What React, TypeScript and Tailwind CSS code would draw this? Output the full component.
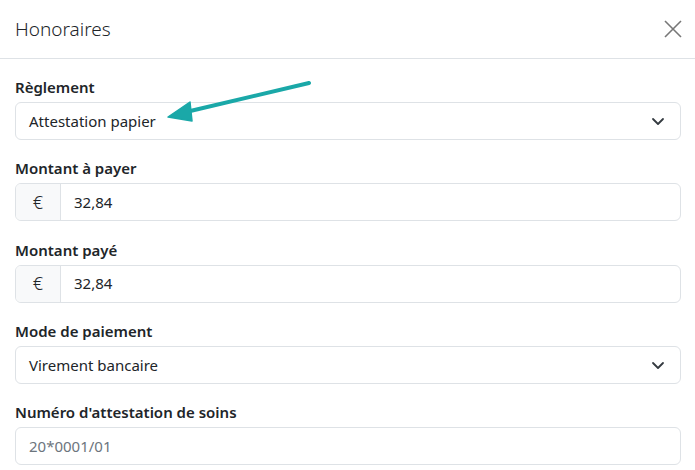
import React from 'react';

const font = { fontFamily: '"Segoe UI", "Noto Sans", "Open Sans", sans-serif' };

function Chevron() {
    return (
        <svg width="14" height="14" viewBox="0 0 14 14" className="shrink-0">
            <path d="M2 5l5 5 5-5" fill="none" stroke="#343a40" strokeWidth="1.8" strokeLinecap="round" strokeLinejoin="round" />
        </svg>
    );
}

function Label({ children }: { children: React.ReactNode }) {
    return <div className="h-[22px] mb-1 text-[15px] leading-[22px] font-semibold text-[#212529]">{children}</div>;
}

function Select({ value }: { value: string }) {
    return (
        <div className="h-[38px] flex items-center justify-between pl-[13px] pr-[15px] border border-[#dee2e6] rounded-md bg-white text-[15px] text-[#212529]">
            <span>{value}</span>
            <Chevron />
        </div>
    );
}

function EuroInput({ value }: { value: string }) {
    return (
        <div className="h-[38px] flex border border-[#dee2e6] rounded-md overflow-hidden text-[15px] text-[#212529]">
            <div className="w-[45px] flex items-center justify-center bg-[#f8f9fa] border-r border-[#dee2e6] text-[18px] font-light">€</div>
            <div className="flex items-center pl-[13px]">{value}</div>
        </div>
    );
}

export default function App() {
    return (
        <div className="w-[695px] h-[470px] bg-white overflow-hidden relative" style={font}>
            <div className="h-[59px] flex items-center justify-between pl-[15px] pr-[13px] border-b border-[#dee2e6]">
                <h1 className="text-[19px] text-[#212529] font-light">Honoraires</h1>
                <svg width="18" height="18" viewBox="0 0 18 18">
                    <path d="M1 1l16 16M17 1L1 17" stroke="#777" strokeWidth="1.6" />
                </svg>
            </div>

            <div className="pt-[17px] px-[15px] pr-[14px] flex flex-col gap-[17.3px]">
                <div>
                    <Label>Règlement</Label>
                    <Select value="Attestation papier" />
                </div>
                <div>
                    <Label>Montant à payer</Label>
                    <EuroInput value="32,84" />
                </div>
                <div>
                    <Label>Montant payé</Label>
                    <EuroInput value="32,84" />
                </div>
                <div>
                    <Label>Mode de paiement</Label>
                    <Select value="Virement bancaire" />
                </div>
                <div>
                    <Label>Numéro d'attestation de soins</Label>
                    <div className="h-[38px] flex items-center pl-[13px] border border-[#dee2e6] rounded-md text-[15px] text-[#6c757d]">
                        20*0001/01
                    </div>
                </div>
            </div>

            <svg className="absolute left-0 top-0 pointer-events-none" width="695" height="470">
                <path d="M309 83 L186 112" stroke="#1aa8a8" strokeWidth="4" strokeLinecap="round" />
                <path d="M168 117 L190 102 L192 121 Z" fill="#1aa8a8" stroke="#1aa8a8" strokeWidth="1.5" strokeLinejoin="round" />
            </svg>
        </div>
    );
}
